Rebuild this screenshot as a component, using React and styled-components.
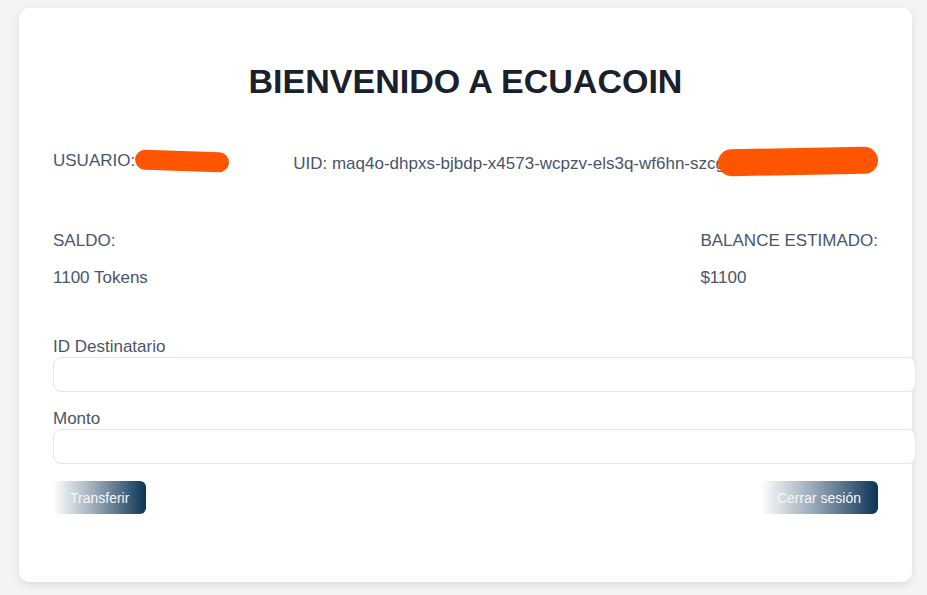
import React from "react";
import styled, { createGlobalStyle } from "styled-components";

const Global = createGlobalStyle`
  html, body { margin: 0; padding: 0; background: #f3f4f6; }
  body { font-family: "Liberation Sans", Arial, sans-serif; }
  * { box-sizing: border-box; }
`;

const Page = styled.div`
  padding: 8px 15px 13px 19px;
  min-height: 595px;
`;

const Card = styled.div`
  background: #ffffff;
  border-radius: 10px;
  box-shadow: 0 3px 8px rgba(0, 0, 0, 0.1);
  padding: 34px 34px 67px;
  min-height: 574px;
`;

const Title = styled.h1`
  margin: 20px 0 0;
  text-align: center;
  font-size: 34px;
  line-height: 39px;
  font-weight: 700;
  color: #1a202c;
`;

const Row = styled.div`
  display: flex;
  justify-content: space-between;
  align-items: flex-start;
  margin-top: ${(p) => p.$mt}px;
`;

const Text = styled.div`
  font-size: 17px;
  line-height: 19px;
  color: #4a5568;
  white-space: nowrap;
  display: flex;
  align-items: center;
`;

const Column = styled.div`
  display: flex;
  flex-direction: column;
  gap: 18px;
`;

const Blob = styled.span`
  display: inline-block;
  width: ${(p) => p.$w}px;
  height: ${(p) => p.$h}px;
  background: #ff5500;
  border-radius: ${(p) => p.$h / 2}px;
  margin-left: ${(p) => p.$ml}px;
  transform: translateY(${(p) => p.$dy}px) rotate(${(p) => p.$rot}deg);
`;

const Form = styled.div`
  margin-top: 50px;
  display: flex;
  flex-direction: column;
`;

const Label = styled.label`
  font-size: 17px;
  line-height: 19px;
  color: #4a5568;
  margin-top: ${(p) => p.$mt || 0}px;
`;

const Input = styled.input`
  box-sizing: content-box;
  width: 100%;
  height: 33px;
  padding: 0 18px;
  margin: 1px 0 0;
  border: 1px solid #e2e8f0;
  border-radius: 8px;
  background: #fff;
  font-size: 16px;
  outline: none;
`;

const Actions = styled.div`
  display: flex;
  justify-content: space-between;
  margin-top: 17px;
`;

const Button = styled.button`
  height: 33px;
  padding: 0 17px;
  border: none;
  border-radius: 6px;
  background: linear-gradient(to right, #ffffff 0%, #9aa9b8 45%, #0b3556 100%);
  color: #f4f6f9;
  font-family: "Liberation Sans", Arial, sans-serif;
  font-size: 14px;
  cursor: pointer;
`;

export default function App() {
  return (
    <>
      <Global />
      <Page>
        <Card>
          <Title>BIENVENIDO A ECUACOIN</Title>
          <Row $mt={49}>
            <Text>
              USUARIO:
              <Blob $w={94} $h={20} $ml={0} $rot={2} $dy={1} />
            </Text>
            <Text>
              UID: maq4o-dhpxs-bjbdp-x4573-wcpzv-els3q-wf6hn-szcg
              <Blob $w={160} $h={27} $ml={-7} $rot={-1} $dy={-2} />
            </Text>
          </Row>
          <Row $mt={54}>
            <Column>
              <Text>SALDO:</Text>
              <Text>1100 Tokens</Text>
            </Column>
            <Column>
              <Text>BALANCE ESTIMADO:</Text>
              <Text>$1100</Text>
            </Column>
          </Row>
          <Form>
            <Label>ID Destinatario</Label>
            <Input type="text" />
            <Label $mt={17}>Monto</Label>
            <Input type="text" />
          </Form>
          <Actions>
            <Button>Transferir</Button>
            <Button>Cerrar sesión</Button>
          </Actions>
        </Card>
      </Page>
    </>
  );
}
